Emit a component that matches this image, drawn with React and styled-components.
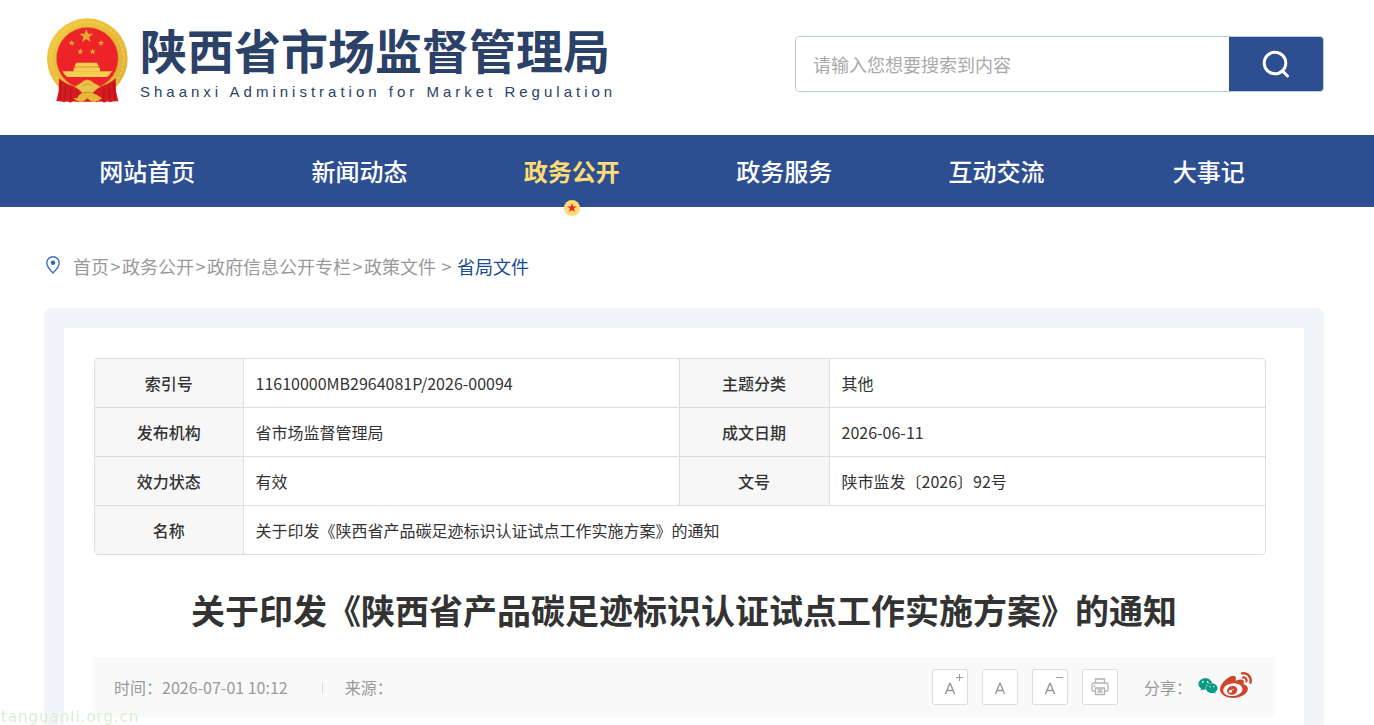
import React from 'react';
import styled, { createGlobalStyle, css } from 'styled-components';
import { FaWeibo, FaWeixin } from 'react-icons/fa';

const GlobalStyle = createGlobalStyle`
  * {
    box-sizing: border-box;
  }

  body {
    margin: 0;
    background-color: white;
    color: #333;
    font-family: "Noto Sans CJK SC", "Noto Sans", sans-serif;
    font-size: 16px;
    line-height: 24px;
  }

  a {
    color: inherit;
    text-decoration: none;
  }

  button {
    padding: 0;
    cursor: pointer;
    font-family: inherit;
  }
`;

const Page = styled.div`
  display: flex;
  flex-direction: column;
  min-height: 100vh;
`;

const Header = styled.header`
  display: flex;
  justify-content: space-between;
  align-items: flex-start;
  padding: 17px 50px 31px 46px;
`;

const Brand = styled.a`
  display: flex;
  gap: 12px;
`;

  const BrandText = styled.div`
    padding-top: 2px;
    color: #2b4168;
  `;

    const BrandName = styled.div`
      font-size: 47px;
      font-weight: 700;
      line-height: 60px;
    `;

    const BrandSub = styled.div`
      margin-top: 3px;
      font-family: "Liberation Sans", Arial, sans-serif;
      font-size: 15px;
      line-height: 20px;
      letter-spacing: 4px;
    `;

const Search = styled.form`
  display: flex;
  width: 529px;
  height: 56px;
  margin-top: 19px;
  border: 1px solid #b8cbdc;
  border-radius: 4px;
  overflow: hidden;
`;

  const SearchInput = styled.input`
    flex: 1;
    min-width: 0;
    padding: 0 17px;
    border: 0;
    outline: 0;
    font-family: inherit;
    font-size: 18px;

    &::placeholder {
      color: #a9a9a9;
    }
  `;

  const SearchButton = styled.button`
    display: flex;
    justify-content: center;
    align-items: center;
    width: 94px;
    border: 0;
    background-color: #2d4f91;
  `;

const Nav = styled.nav`
  padding: 0 59px 0 41px;
  background-color: #2d4f91;
`;

  const NavList = styled.ul`
    display: grid;
    grid-template-columns: repeat(6, 1fr);
    margin: 0;
    padding: 0;
    list-style: none;
  `;

  const NavItem = styled.li`
    position: relative;
    text-align: center;
  `;

  const NavLink = styled.a`
    display: block;
    color: white;
    font-size: 24px;
    font-weight: 500;
    line-height: 72px;

    ${(props) => props.$active && css`
      color: #ffdc73;
      font-weight: 700;
    `}
  `;

  const NavMark = styled.svg`
    position: absolute;
    bottom: -9px;
    left: 50%;
    margin-left: -8px;
  `;

const Main = styled.main`
  display: flex;
  flex: 1;
  flex-direction: column;
  padding: 0 50px 0 44px;
`;

const Crumbs = styled.nav`
  display: flex;
  align-items: center;
  padding: 45px 0 28px 2px;
  color: #999;
  font-size: 18px;
  line-height: 28px;
`;

  const PinIcon = styled.svg`
    margin: 0 13px 3px 0;
  `;

  const CrumbSep = styled.span`
    width: 13px;
    margin: 0 ${(props) => (props.$wide ? '4px' : '0')};
    text-align: center;
  `;

  const CrumbCurrent = styled.a`
    color: #1b4c8f;
  `;

const Frame = styled.div`
  display: flex;
  flex: 1;
  padding: 20px 20px 0;
  border-radius: 8px 8px 0 0;
  background-color: #f1f5f9;
`;

const Article = styled.article`
  flex: 1;
  padding: 30px 30px 8px;
  background-color: white;
`;

const InfoWrap = styled.div`
  margin-right: 8px;
  border: 1px solid #ddd;
  border-radius: 4px;
  overflow: hidden;
`;

const InfoTable = styled.table`
  width: 100%;
  table-layout: fixed;
  border-collapse: collapse;

  tr + tr {
    border-top: 1px solid #ddd;
  }

  th, td {
    height: 49px;
    padding: 0 12px;
    text-align: left;
    font-weight: 400;
  }

  tr:first-child th, tr:first-child td {
    height: 48px;
  }

  th {
    border-right: 1px solid #ddd;
    background-color: #f7f7f7;
    text-align: center;
    font-weight: 500;
  }

  td + th {
    border-left: 1px solid #ddd;
  }
`;

const Title = styled.h1`
  margin: 29px 0 21px;
  font-size: 34px;
  font-weight: 700;
  line-height: 52px;
  text-align: center;
`;

const MetaBar = styled.div`
  display: flex;
  justify-content: space-between;
  align-items: center;
  height: 60px;
  padding: 0 20px;
  background-color: #f9f9f9;
  color: #999;
`;

  const MetaGroup = styled.div`
    display: flex;
    align-items: center;
  `;

  const MetaDivider = styled.span`
    width: 1px;
    height: 10px;
    margin: 2px 22px 0 34px;
    background-color: #d5d5d5;
  `;

  const Tools = styled.div`
    display: flex;
    gap: 14px;
    margin-right: 26px;
  `;

  const ToolButton = styled.button`
    display: flex;
    justify-content: center;
    align-items: center;
    width: 36px;
    height: 36px;
    border: 1px solid #ddd;
    border-radius: 2px;
    background-color: white;
    color: #999;
  `;

  const ShareLink = styled.a`
    display: flex;
    color: ${(props) => props.$color};
  `;

  const ShareIcons = styled.div`
    display: flex;
    align-items: center;
    gap: 2px;
    margin: 0 2px 2px 6px;
  `;

const Watermark = styled.div`
  position: fixed;
  bottom: 0;
  left: 1px;
  color: #dcedd2;
  font-family: "DejaVu Sans", sans-serif;
  font-size: 15px;
  line-height: 16px;
  letter-spacing: 1px;
`;

const STAR = 'M0 -10 L2.4 -3.2 L9.5 -3.1 L3.9 1.2 L5.9 8.1 L0 4 L-5.9 8.1 L-3.9 1.2 L-9.5 -3.1 L-2.4 -3.2 Z';

const Emblem = () => (
  <svg width="82" height="87" viewBox="20 20 246 261" aria-hidden="true">
    <defs>
      <linearGradient id="gold" x1="0" y1="0" x2="1" y2="1">
        <stop offset="0" stopColor="#f3ca45" />
        <stop offset="0.5" stopColor="#e9bb38" />
        <stop offset="1" stopColor="#dcae38" />
      </linearGradient>
    </defs>
    <circle cx="144" cy="145" r="121" fill="url(#gold)" />
    <circle cx="144" cy="145" r="110" fill="none" stroke="#f8da63" strokeWidth="7" strokeDasharray="9 5" opacity="0.4" />
    <circle cx="144" cy="144" r="93" fill="#ee2329" stroke="#d69b25" strokeWidth="2" />
    <g fill="#e5a92d">
      <path d={STAR} transform="translate(141 77) scale(2.2)" />
      <path d={STAR} transform="translate(97 98)" />
      <path d={STAR} transform="translate(185 98)" />
      <path d={STAR} transform="translate(123 124)" />
      <path d={STAR} transform="translate(160 124)" />
    </g>
    <g fill="#f4cf50">
      <path d="M111 157 H173 L179 169 H105 Z" />
      <path d="M109 169 H176 V176 H109 Z" fill="#e2ac32" />
      <path d="M103 172 H182 V184 H103 Z" />
      <path d="M69 183 H218 Q212 194 203 200 H84 Q75 194 69 183 Z" />
    </g>
    <path d="M84 200 H203 L174 213 Q144 200 114 213 Z" fill="#ee2329" />
    <path d="M59 204 Q81 224 113 231 L126 243 L118 276 Q102 270 93 277 Q83 270 75 276 Q67 272 51 273 L58 242 Z" fill="#d61b20" />
    <path d="M229 204 Q207 224 175 231 L162 243 L170 276 Q186 270 195 277 Q205 270 213 276 Q221 272 237 273 L230 242 Z" fill="#d61b20" />
    <path d="M65 216 L63 266 M79 228 L76 268 M94 235 L95 270 M223 216 L226 266 M209 228 L212 268 M194 235 L193 270" stroke="#a8161a" strokeWidth="3" fill="none" />
    <path d="M108 252 Q144 240 180 252 L172 274 H116 Z" fill="#d61b20" />
    <path d="M114 264 Q118 250 132 247 H156 Q172 250 188 264 Q174 277 160 274 Q150 272 144 264 Q138 272 128 274 Q116 277 102 264 Z" fill="#e7b634" />
    <path d="M106 229 L124 219 Q144 198 164 219 L183 229 L171 237 Q160 251 144 246 Q130 251 118 237 Z" fill="#edc149" stroke="#cf982a" strokeWidth="2" />
    <path d="M131 226 Q144 216 157 226" fill="none" stroke="#d39c2c" strokeWidth="3" />
  </svg>
);

const PrinterIcon = () => (
  <svg width="18" height="18" viewBox="0 0 18 18" fill="none" stroke="#b3b3b3" strokeWidth="1.3" aria-hidden="true">
    <path d="M4.5 5 V1 H13.5 V5" />
    <path d="M4 13 H2 Q1 13 1 12 V6.5 Q1 5 2.5 5 H15.5 Q17 5 17 6.5 V12 Q17 13 16 13 H14" />
    <path d="M4.5 10 H13.5 V16.5 H4.5 Z M2.5 8 H4.5 M6.5 12 H11.5 M6.5 14 H11.5" />
  </svg>
);

// "sign" is the small plus or minus at the top right of the letter
const FontSizeIcon = ({ sign }) => (
  <svg width="34" height="34" viewBox="0 0 34 34" fill="none" stroke="#999" aria-hidden="true">
    <path d="M12.5 24 L16.7 13.5 H17.3 L21.5 24 M14 20.5 H20" strokeWidth="1.4" />
    {sign && <path d="M23 7.5 H30" />}
    {sign === 'plus' && <path d="M26.5 4 V11" />}
  </svg>
);

const navItems = ['网站首页', '新闻动态', '政务公开', '政务服务', '互动交流', '大事记'];

const crumbs = ['首页', '政务公开', '政府信息公开专栏', '政策文件'];

const infoRows = [
  [['索引号', '11610000MB2964081P/2026-00094'], ['主题分类', '其他']],
  [['发布机构', '省市场监督管理局'], ['成文日期', '2026-06-11']],
  [['效力状态', '有效'], ['文号', '陕市监发〔2026〕92号']],
  [['名称', '关于印发《陕西省产品碳足迹标识认证试点工作实施方案》的通知']],
];

const App = () => {
  return (
    <Page>
      <GlobalStyle />
      <Header>
        <Brand href="#">
          <Emblem />
          <BrandText>
            <BrandName>陕西省市场监督管理局</BrandName>
            <BrandSub>Shaanxi Administration for Market Regulation</BrandSub>
          </BrandText>
        </Brand>
        <Search onSubmit={(e) => e.preventDefault()}>
          <SearchInput type="text" aria-label="搜索" placeholder="请输入您想要搜索到内容" />
          <SearchButton type="submit" aria-label="搜索">
            <svg width="28" height="28" viewBox="0 0 28 28" fill="none" stroke="white" strokeWidth="3" strokeLinecap="round">
              <circle cx="13" cy="13" r="10.8" />
              <path d="M20.5 21 L25.5 26" />
            </svg>
          </SearchButton>
        </Search>
      </Header>

      <Nav>
        <NavList>
          {navItems.map((item) => (
            <NavItem key={item}>
              <NavLink href="#" $active={item === '政务公开'}>{item}</NavLink>
              {item === '政务公开' && (
                <NavMark width="16" height="16" viewBox="-8 -8 16 16">
                  <circle r="8" fill="#ffdc73" />
                  <path d={STAR} transform="scale(0.5)" fill="#ee2329" />
                </NavMark>
              )}
            </NavItem>
          ))}
        </NavList>
      </Nav>

      <Main>
        <Crumbs>
          <PinIcon width="14" height="18" viewBox="0 0 14 18" fill="none">
            <path d="M7 17 Q0.8 11 0.8 6.8 A6.2 6.1 0 0 1 13.2 6.8 Q13.2 11 7 17 Z" stroke="#3a6fc0" strokeWidth="1.4" />
            <circle cx="7" cy="6.7" r="2.3" fill="#2e6bc6" />
          </PinIcon>
          {crumbs.map((crumb, i) => (
            <React.Fragment key={crumb}>
              <a href="#">{crumb}</a>
              <CrumbSep $wide={i === crumbs.length - 1}>&gt;</CrumbSep>
            </React.Fragment>
          ))}
          <CrumbCurrent href="#">省局文件</CrumbCurrent>
        </Crumbs>

        <Frame>
          <Article>
            <InfoWrap>
              <InfoTable>
                <colgroup>
                  <col width="148" />
                  <col />
                  <col width="150" />
                  <col />
                </colgroup>
                <tbody>
                  {infoRows.map((row) => (
                    <tr key={row[0][0]}>
                      {row.map(([label, value]) => (
                        <React.Fragment key={label}>
                          <th scope="row">{label}</th>
                          <td colSpan={row.length === 1 ? 3 : 1}>{value}</td>
                        </React.Fragment>
                      ))}
                    </tr>
                  ))}
                </tbody>
              </InfoTable>
            </InfoWrap>

            <Title>关于印发《陕西省产品碳足迹标识认证试点工作实施方案》的通知</Title>

            <MetaBar>
              <MetaGroup>
                <span>时间：2026-07-01 10:12</span>
                <MetaDivider />
                <span>来源：</span>
              </MetaGroup>
              <MetaGroup>
                <Tools>
                  <ToolButton type="button" aria-label="放大字体"><FontSizeIcon sign="plus" /></ToolButton>
                  <ToolButton type="button" aria-label="默认字体"><FontSizeIcon /></ToolButton>
                  <ToolButton type="button" aria-label="缩小字体"><FontSizeIcon sign="minus" /></ToolButton>
                  <ToolButton type="button" aria-label="打印"><PrinterIcon /></ToolButton>
                </Tools>
                <span>分享：</span>
                <ShareIcons>
                  <ShareLink href="#" aria-label="微信" $color="#079b85"><FaWeixin size={20} /></ShareLink>
                  <ShareLink href="#" aria-label="微博" $color="#cf452b"><FaWeibo size={32} /></ShareLink>
                </ShareIcons>
              </MetaGroup>
            </MetaBar>
          </Article>
        </Frame>
      </Main>
      <Watermark>tanguanli.org.cn</Watermark>
    </Page>
  );
}

export default App;
